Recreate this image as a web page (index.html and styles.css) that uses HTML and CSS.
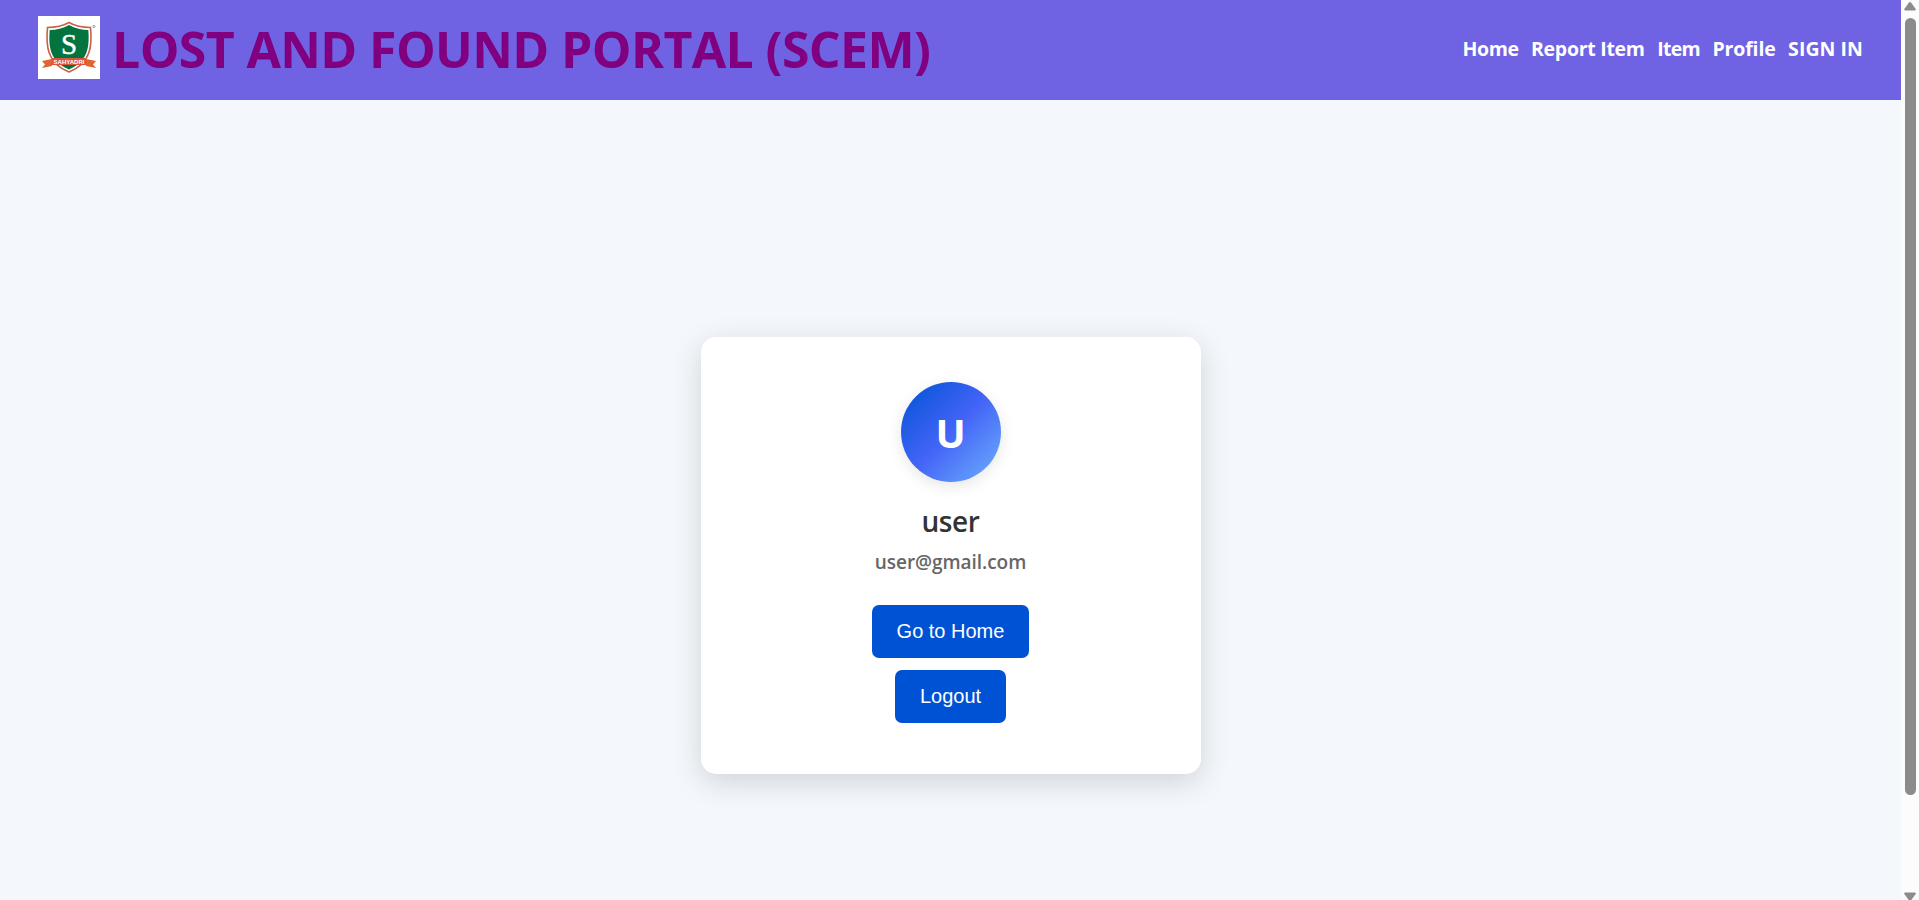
FILE: index.html
```html
<!DOCTYPE html>
<html lang="en">
<head>
<meta charset="utf-8">
<title>Lost and Found Portal</title>
<link rel="stylesheet" href="styles.css">
</head>
<body>
<div class="page">
  <header class="header">
    <div class="brand">
      <svg class="logo" viewBox="0 0 62 63">
        <rect width="62" height="63" fill="#fff"/>
        <path d="M31 6.500C25 10 17 11.500 9.500 11.500C8 28 8 47 31 56C54 47 54 28 52.500 11.500C45 11.500 37 10 31 6.500Z" fill="#fff" stroke="#ca6043" stroke-width="1.600"/>
        <path d="M31 9C25 12.500 18 14 11.700 14C10.500 29 11 45 31 53.500C51 45 51.500 29 50.300 14C44 14 37 12.500 31 9Z" fill="#04743f"/>
        <path d="M4 45L14 43V50L4 52L7 48.500ZM58 45L48 43V50L58 52L55 48.500Z" fill="#e2632f"/>
        <path d="M14 42H48V49H14Z" fill="#d9573a"/>
        <text class="logo-letter" x="31" y="38" text-anchor="middle">S</text>
        <text class="logo-name" x="31" y="47.700" text-anchor="middle" textLength="31">SAHYADRI</text>
        <circle cx="56" cy="10.500" r="1.100" fill="none" stroke="#777" stroke-width=".7"/>
      </svg>
      <h1 class="title">LOST AND FOUND PORTAL (SCEM)</h1>
    </div>
    <nav class="nav">
      <a class="link home">Home</a>
      <a class="link report">Report Item</a>
      <a class="link item">Item</a>
      <a class="link profile">Profile</a>
      <a class="link sign">SIGN IN</a>
    </nav>
  </header>
  <main class="main">
    <section class="card">
      <div class="avatar">U</div>
      <h2 class="name">user</h2>
      <p class="email">user@gmail.com</p>
      <button class="btn">Go to Home</button>
      <button class="btn">Logout</button>
    </section>
  </main>
</div>
<div class="scrollbar">
  <svg class="arrow" viewBox="0 0 14 10"><path d="M2.500 9.500Q0.500 9.500 1.500 7.800L5.800 1.800Q7 .3 8.200 1.800L12.500 7.800Q13.500 9.500 11.500 9.500Z" fill="#8b8b8b"/></svg>
  <div class="thumb"></div>
  <svg class="arrow" viewBox="0 0 14 10"><path d="M2.500 .5Q0.500 .5 1.500 2.200L5.800 8.200Q7 9.700 8.200 8.200L12.500 2.200Q13.500 .5 11.500 .5Z" fill="#8b8b8b"/></svg>
</div>
</body>
</html>
```
FILE: styles.css
```css
* { box-sizing: border-box; }
body {
  margin: 0;
  height: 900px;
  overflow: hidden;
  display: flex;
  font-family: "Open Sans", "Noto Sans", sans-serif;
  background: #f4f7fc;
}
.page { flex: 1; display: flex; flex-direction: column; }
.header {
  height: 100px;
  padding: 0 38px;
  display: flex;
  align-items: center;
  justify-content: space-between;
  background: #6f63e4;
}
.brand { display: flex; align-items: center; gap: 12px; }
.logo { width: 62px; height: 63px; margin-bottom: 5px; }
.logo-letter { font: 400 29px "Liberation Serif", serif; fill: #fff; stroke: #fff; stroke-width: .4; }
.logo-name { font: 700 6px "Liberation Sans", sans-serif; fill: #fff; }
.title {
  margin: 0 0 2px;
  font-size: 50px;
  line-height: 68px;
  font-weight: 700;
  letter-spacing: -.62px;
  color: #800080;
  white-space: nowrap;
}
.nav { display: flex; gap: 12.500px; margin-bottom: 4px; }
.link { color: #fff; font-size: 19.500px; font-weight: 700; line-height: 27px; white-space: nowrap; }
.home { letter-spacing: -.45px; }
.report { letter-spacing: -.28px; }
.item { letter-spacing: -.7px; }
.profile { letter-spacing: -.15px; }
.sign { letter-spacing: .05px; }
.main { height: 800px; padding-top: 237px; }
.card {
  width: 500px;
  height: 437px;
  margin: 0 auto;
  padding-top: 45px;
  display: flex;
  flex-direction: column;
  align-items: center;
  border-radius: 15px;
  background: #fff;
  box-shadow: 0 8px 30px rgba(0, 0, 0, .15);
}
.avatar {
  width: 100px;
  height: 100px;
  border-radius: 50%;
  display: flex;
  align-items: center;
  justify-content: center;
  background: linear-gradient(135deg, #0052d4, #4364f7, #6fb1fc);
  box-shadow: 0 4px 15px rgba(0, 0, 0, .1);
  color: #fff;
  font-size: 40px;
  font-weight: 700;
}
.name { margin: 19px 0 0; font-size: 28px; line-height: 40px; font-weight: 600; letter-spacing: -.4px; color: #333; }
.email { margin: 7px 0 29px; font-size: 19px; line-height: 28px; font-weight: 600; letter-spacing: -.05px; color: #666; }
.btn {
  height: 53px;
  margin: 0 0 12px;
  padding: 0 25px;
  border: 0;
  border-radius: 7px;
  background: #0052d4;
  color: #fff;
  font: 20px "Liberation Sans", Arial, sans-serif;
}
.scrollbar {
  width: 18px;
  height: 900px;
  padding-top: 1px;
  display: flex;
  flex-direction: column;
  align-items: center;
  background: #fcfcfc;
}
.arrow { width: 14px; height: 10px; flex: none; }
.thumb { width: 11px; height: 777px; margin: 7px 0 97px; flex: none; border-radius: 6px; background: #8b8b8b; }
```
